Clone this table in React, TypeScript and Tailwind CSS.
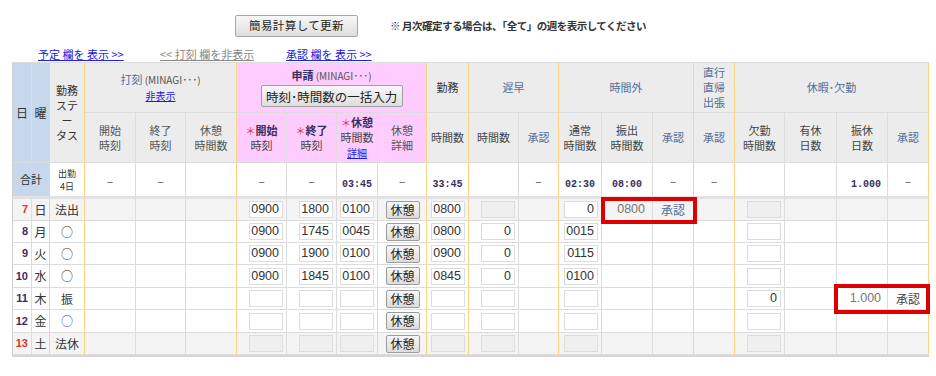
import type { ReactNode } from 'react'

const cx = (...a: (string | false | undefined)[]) => a.filter(Boolean).join(' ')

// columns whose right edge is drawn in orange (group boundaries)
const ORANGE = new Set([1, 2, 5, 9, 10, 12, 15, 16, 20])
const WIDTHS = [20, 18, 35, 51, 50, 51, 50, 50, 41, 49, 42, 50, 40, 43, 51, 41, 41, 50, 52, 51, 41]

const jp = "font-['Noto_Sans_CJK_JP',sans-serif]"
const num = "font-['Liberation_Sans',sans-serif]"

function Inp({ v, dis }: { v?: string; dis?: boolean }) {
  return (
    <div className="flex justify-end pr-[3px]">
      <div
        className={cx(
          'h-[17px] w-[34px] border border-[#dcdcdc] pr-[3px] text-right text-[12.5px] leading-[15px] text-[#333]',
          num,
          dis ? 'bg-[#efefef]' : 'bg-white'
        )}
      >
        {v}
      </div>
    </div>
  )
}

function BreakBtn() {
  return (
    <div className="flex justify-center pl-[1px]">
      <div className="flex h-[18px] w-[34px] items-center justify-center rounded-[2px] border border-[#9c9c9c] bg-gradient-to-b from-[#f7f7f7] to-[#dcdcdc] text-[12px] leading-none text-[#222]">
        休憩
      </div>
    </div>
  )
}

function Dash() {
  return <span className="text-[11px] text-[#555]">−</span>
}

function Bold({ children }: { children: ReactNode }) {
  return <span className="font-['Liberation_Mono',monospace] text-[10px] font-bold text-[#3a2f5c]">{children}</span>
}

function Day({ n, red }: { n: number; red?: boolean }) {
  return (
    <div className={cx('pr-[3px] text-right text-[11px] font-bold', num, red ? 'text-[#e8322c]' : 'text-[#3c2e5e]')}>{n}</div>
  )
}

function RedBox({ className }: { className: string }) {
  return <div className={cx('pointer-events-none absolute z-10 border-[4px] border-[#dd0000]', className)} />
}

function BodyRow({ cells, hol, tall }: { cells: ReactNode[]; hol?: boolean; tall?: boolean }) {
  return (
    <tr className={tall ? 'h-[23px]' : 'h-[22px]'}>
      {cells.map((c, i) => (
        <td
          key={i}
          className={cx(
            'relative border-r border-b border-b-[#dcdcdc] p-0 text-center align-middle text-[12px] text-[#333]',
            ORANGE.has(i) ? 'border-r-[#ffd37f]' : 'border-r-[#dcdcdc]',
            i === 0 && 'border-l border-l-[#d0d0d0]',
            hol ? 'bg-[#f4f4f4]' : 'bg-white'
          )}
        >
          {c}
        </td>
      ))}
    </tr>
  )
}

const H = 'border-r border-b border-b-[#dcdcdc] p-0 text-center align-middle text-[11px] leading-[15px]'
const HG = 'border-r-[#dcdcdc]'
const HO = 'border-r-[#ffd37f]'
const grey = 'bg-[#ececec]'
const pink = 'bg-[#ffccff]'
const blue = 'bg-[#c8d8ec]'
const bluegray = 'text-[#4f6f9a]'

function Star({ children }: { children: ReactNode }) {
  return (
    <>
      <span className="text-[10px] text-[#e8322c]">＊</span>
      <span className="font-bold text-[#3a2f5c]">{children}</span>
    </>
  )
}

export default function App() {
  const e = (n: number) => Array.from({ length: n }, () => null as ReactNode)

  const rows: { cells: ReactNode[]; hol?: boolean; tall?: boolean }[] = [
    {
      hol: true,
      cells: [
        <Day n={7} red />, '日', '法出', ...e(3),
        <Inp v="0900" />, <Inp v="1800" />, <Inp v="0100" />, <BreakBtn />, <Inp v="0800" />,
        <Inp dis />, null,
        <Inp v="0" />,
        <>
          <RedBox className="-top-[2px] -left-[1px] h-[27px] w-[96px]" />
          <div className={cx('pr-[7px] text-right text-[12.5px] text-[#777]', num)}>0800</div>
        </>,
        <span className={bluegray}>承認</span>,
        null, <Inp dis />, ...e(3),
      ],
    },
    {
      cells: [
        <Day n={8} />, '月', '○', ...e(3),
        <Inp v="0900" />, <Inp v="1745" />, <Inp v="0045" />, <BreakBtn />, <Inp v="0800" />,
        <Inp v="0" />, null, <Inp v="0015" />, null, null, null, <Inp />, ...e(3),
      ],
    },
    {
      cells: [
        <Day n={9} />, '火', '○', ...e(3),
        <Inp v="0900" />, <Inp v="1900" />, <Inp v="0100" />, <BreakBtn />, <Inp v="0900" />,
        <Inp v="0" />, null, <Inp v="0115" />, null, null, null, <Inp />, ...e(3),
      ],
    },
    {
      tall: true,
      cells: [
        <Day n={10} />, '水', '○', ...e(3),
        <Inp v="0900" />, <Inp v="1845" />, <Inp v="0100" />, <BreakBtn />, <Inp v="0845" />,
        <Inp v="0" />, null, <Inp v="0100" />, null, null, null, <Inp />, ...e(3),
      ],
    },
    {
      cells: [
        <Day n={11} />, '木', '振', ...e(3),
        <Inp />, <Inp />, <Inp />, <BreakBtn />, <Inp />,
        <Inp />, null, <Inp />, null, null, null, <Inp v="0" />, null,
        <>
          <RedBox className="-top-[4px] -left-[3px] h-[30px] w-[96px]" />
          <div className={cx('pr-[6px] text-right text-[12.5px] text-[#777]', num)}>1.000</div>
        </>,
        <span className="text-[#444]">承認</span>,
      ],
    },
    {
      tall: true,
      cells: [
        <Day n={12} />, '金', <span className="text-[#2b3cff]">○</span>, ...e(3),
        <Inp />, <Inp />, <Inp />, <BreakBtn />, <Inp />,
        <Inp />, null, <Inp />, null, null, null, <Inp />, ...e(3),
      ],
    },
    {
      hol: true,
      cells: [
        <Day n={13} red />, '土', '法休', ...e(3),
        <Inp dis />, <Inp dis />, <Inp dis />, <BreakBtn />, <Inp dis />,
        <Inp dis />, null, <Inp dis />, null, null, null, <Inp dis />, ...e(3),
      ],
    },
  ]

  return (
    <div className={cx('h-[376px] w-[936px] overflow-hidden bg-white text-[#333]', jp)}>
      <div className="flex items-center pt-[15px] pl-[235px]">
        <div className="flex h-[22px] w-[123px] items-center justify-center rounded-[2px] border border-[#a6a6a6] bg-gradient-to-b from-[#f8f8f8] to-[#dedede] text-[11.5px] tracking-[0.4px] text-[#222]">
          簡易計算して更新
        </div>
        <div className="ml-[32px] text-[10.5px] font-bold tracking-[-0.5px] text-[#333]">
          ※ 月次確定する場合は、「全て」の週を表示してください
        </div>
      </div>

      <div className="mt-[9px] flex h-[16px] items-center pl-[38px] text-[11px] leading-[16px]">
        <span className="w-[122px] text-[#2020dd] underline">予定 欄を 表示 &gt;&gt;</span>
        <span className="w-[126px] text-[#888] underline">&lt;&lt; 打刻 欄を非表示</span>
        <span className="text-[#2020dd] underline">承認 欄を 表示 &gt;&gt;</span>
      </div>

      <table className="ml-[12px] w-[917px] table-fixed border-separate border-spacing-0 border-b-2 border-b-[#d6d6d6]">
        <colgroup>
          {WIDTHS.map((w, i) => (
            <col key={i} style={{ width: w }} />
          ))}
        </colgroup>
        <thead>
          <tr className="h-[51px]">
            <th rowSpan={2} className={cx(H, HG, blue, 'border-t border-l border-t-[#dcdcdc] border-l-[#d0d0d0] text-[12px] font-normal')}>日</th>
            <th rowSpan={2} className={cx(H, HO, blue, 'border-t border-t-[#dcdcdc] text-[12px] font-normal')}>曜</th>
            <th rowSpan={2} className={cx(H, HO, grey, 'border-t border-t-[#dcdcdc] font-normal')}>
              勤務
              <br />
              ステ
              <br />
              ー
              <br />
              タス
            </th>
            <th colSpan={3} className={cx(H, HO, grey, 'border-t border-t-[#dcdcdc] font-normal')}>
              <div>
                <span className={bluegray}>打刻</span>
                <span className="text-[10px] text-[#555]"> (MINAGI･･･)</span>
              </div>
              <div className="mt-[1px] text-[10px] text-[#1a1aee] underline">非表示</div>
            </th>
            <th colSpan={4} className={cx(H, HO, pink, 'border-t border-t-[#dcdcdc] font-normal')}>
              <div>
                <span className="font-bold text-[#3a2f5c]">申請</span>
                <span className="text-[10px] text-[#555]"> (MINAGI･･･)</span>
              </div>
              <div className="mt-[2px] flex justify-center">
                <div className="flex h-[22px] w-[142px] items-center justify-center rounded-[2px] border border-[#a0a0a0] bg-gradient-to-b from-[#f8f8f8] to-[#dedede] text-[12.5px] text-[#222]">
                  時刻･時間数の一括入力
                </div>
              </div>
            </th>
            <th className={cx(H, HO, grey, 'border-t border-t-[#dcdcdc] font-normal')}>勤務</th>
            <th colSpan={2} className={cx(H, HO, grey, bluegray, 'border-t border-t-[#dcdcdc] font-normal')}>遅早</th>
            <th colSpan={3} className={cx(H, HO, grey, bluegray, 'border-t border-t-[#dcdcdc] font-normal')}>時間外</th>
            <th className={cx(H, HO, grey, bluegray, 'border-t border-t-[#dcdcdc] font-normal')}>
              直行
              <br />
              直帰
              <br />
              出張
            </th>
            <th colSpan={4} className={cx(H, HO, grey, bluegray, 'border-t border-t-[#dcdcdc] font-normal')}>休暇･欠勤</th>
          </tr>
          <tr className="h-[50px]">
            <th className={cx(H, HG, grey, 'font-normal text-[#555]')}>開始<br />時刻</th>
            <th className={cx(H, HG, grey, 'font-normal text-[#555]')}>終了<br />時刻</th>
            <th className={cx(H, HO, grey, 'font-normal text-[#555]')}>休憩<br />時間数</th>
            <th className={cx(H, HG, pink, 'font-normal text-[#444]')}><Star>開始</Star><br />時刻</th>
            <th className={cx(H, HG, pink, 'font-normal text-[#444]')}><Star>終了</Star><br />時刻</th>
            <th className={cx(H, HG, pink, 'font-normal text-[#444]')}>
              <Star>休憩</Star>
              <br />
              時間数
              <br />
              <span className="text-[10px] text-[#1a1aee] underline">詳細</span>
            </th>
            <th className={cx(H, HO, pink, 'font-normal text-[#555]')}>休憩<br />詳細</th>
            <th className={cx(H, HO, grey, 'font-normal text-[#444]')}>時間数</th>
            <th className={cx(H, HG, grey, 'font-normal text-[#444]')}>時間数</th>
            <th className={cx(H, HO, grey, bluegray, 'font-normal')}>承認</th>
            <th className={cx(H, HG, grey, 'font-normal text-[#444]')}>通常<br />時間数</th>
            <th className={cx(H, HG, grey, 'font-normal text-[#444]')}>振出<br />時間数</th>
            <th className={cx(H, HO, grey, bluegray, 'font-normal')}>承認</th>
            <th className={cx(H, HO, grey, bluegray, 'font-normal')}>承認</th>
            <th className={cx(H, HG, grey, 'font-normal text-[#444]')}>欠勤<br />時間数</th>
            <th className={cx(H, HG, grey, 'font-normal text-[#444]')}>有休<br />日数</th>
            <th className={cx(H, HG, grey, 'font-normal text-[#444]')}>振休<br />日数</th>
            <th className={cx(H, HO, grey, bluegray, 'font-normal')}>承認</th>
          </tr>
        </thead>
        <tbody>
          <tr className="h-[36px]">
            <td colSpan={2} className={cx(H, HO, blue, 'border-l border-l-[#d0d0d0] border-b-[3px] border-b-[#e2e2e2] text-[11px]')}>合計</td>
            {[
              <div className="text-[9px] leading-[13px]">出勤<br />4日</div>,
              <Dash />, <Dash />, null,
              <Dash />, <Dash />, <Bold>03:45</Bold>, <Dash />,
              <Bold>33:45</Bold>,
              null, <Dash />,
              <Bold>02:30</Bold>, <Bold>08:00</Bold>, <Dash />,
              <Dash />,
              null, null, <div className="pr-[6px] text-right"><Bold>1.000</Bold></div>, <Dash />,
            ].map((c, j) => {
              const i = j + 2
              return (
                <td
                  key={i}
                  className={cx(
                    'border-r border-b-[3px] border-b-[#e2e2e2] bg-white p-0 text-center align-middle',
                    ORANGE.has(i) ? 'border-r-[#ffd37f]' : 'border-r-[#dcdcdc]'
                  )}
                >
                  {c}
                </td>
              )
            })}
          </tr>
          {rows.map((r, i) => (
            <BodyRow key={i} cells={r.cells} hol={r.hol} tall={r.tall} />
          ))}
        </tbody>
      </table>
    </div>
  )
}
